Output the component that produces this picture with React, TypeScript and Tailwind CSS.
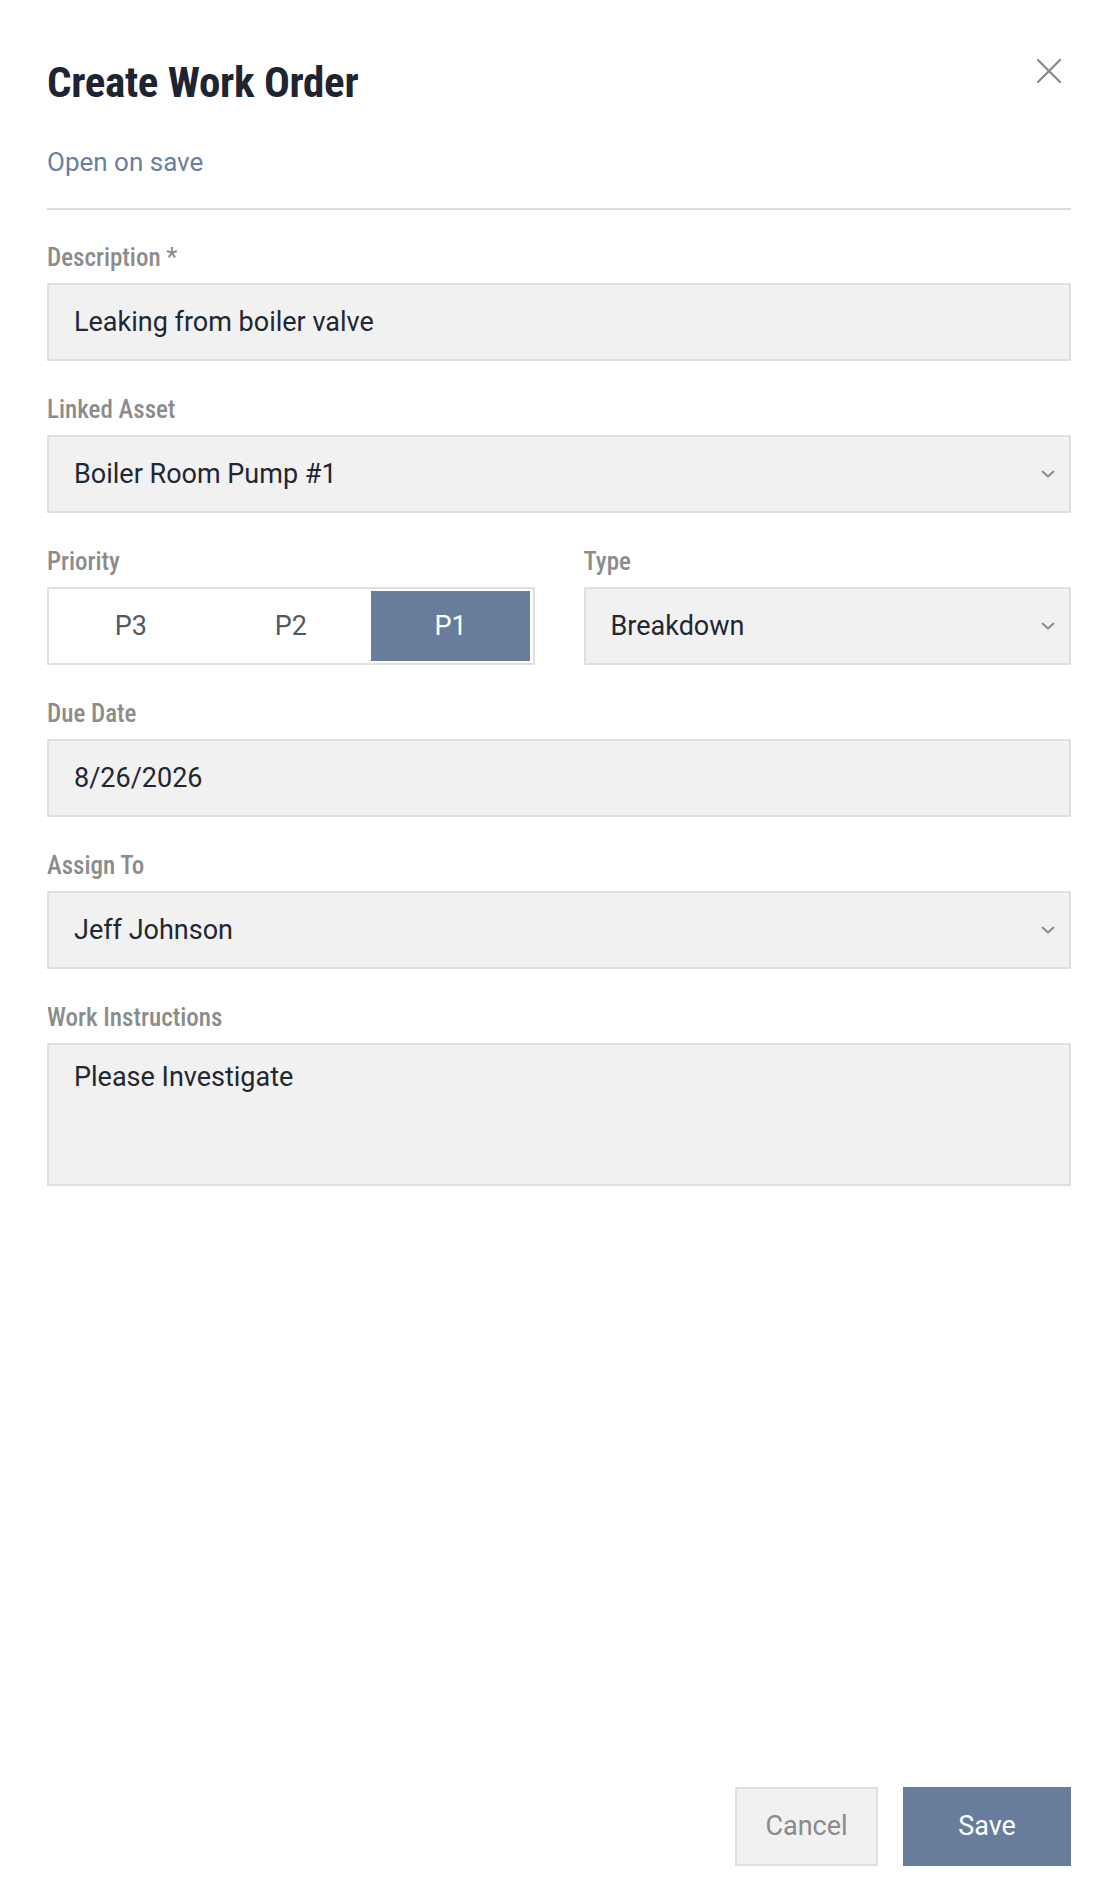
import { ReactNode } from 'react'

const Chevron = () => (
  <svg width="14" height="8" viewBox="0 0 14 8" fill="none" className="shrink-0">
    <path d="M1.5 1.5 L7 6.5 L12.5 1.5" stroke="#8a8a8a" strokeWidth="1.8" strokeLinecap="round" strokeLinejoin="round" />
  </svg>
)

const Field = ({ label, children }: { label: string; children: ReactNode }) => (
  <div className="flex flex-col">
    <div className="h-[26px] text-[25px] font-medium leading-none text-[#8c8c8c] font-stretch-[75%]">
      {label}
    </div>
    <div className="mt-[12px]">{children}</div>
  </div>
)

const Box = ({ value, select }: { value: string; select?: boolean }) => (
  <div className="flex h-[78px] items-center justify-between border-2 border-[#dce0e5] bg-[#f1f1f1] pl-[25px] pr-[14px] text-[27px] text-[#222731]">
    <span>{value}</span>
    {select && <Chevron />}
  </div>
)

export default function App() {
  return (
    <div className="flex min-h-[1894px] w-full flex-col bg-white px-[47px] font-['Roboto',sans-serif]">
      <header className="mt-[61px] flex items-start justify-between">
        <h1 className="h-[43px] text-[43px] font-bold leading-none tracking-[-0.3px] text-[#1f2530] font-stretch-[75%]">
          Create Work Order
        </h1>
        <button className="mr-[8px] mt-[-4px] p-[1px]">
          <svg width="26" height="26" viewBox="0 0 26 26" fill="none">
            <path d="M2 2 L24 24 M24 2 L2 24" stroke="#888888" strokeWidth="2.2" strokeLinecap="round" />
          </svg>
        </button>
      </header>

      <a className="mt-[45px] h-[26px] text-[26px] leading-none text-[#6a7fa0]">Open on save</a>

      <div className="mt-[33px] h-[2px] bg-[#dcdcdc]" />

      <div className="mt-[35px] flex flex-col gap-[36px]">
        <Field label="Description *">
          <Box value="Leaking from boiler valve" />
        </Field>

        <Field label="Linked Asset">
          <Box value="Boiler Room Pump #1" select />
        </Field>

        <div className="grid grid-cols-2 gap-[49px]">
          <Field label="Priority">
            <div className="grid h-[78px] grid-cols-3 border-2 border-[#e0e0e0] bg-white p-[2px] text-[27px]">
              <div className="flex items-center justify-center text-[#555a60]">P3</div>
              <div className="flex items-center justify-center text-[#555a60]">P2</div>
              <div className="flex items-center justify-center bg-[#687d9c] text-white">P1</div>
            </div>
          </Field>
          <Field label="Type">
            <Box value="Breakdown" select />
          </Field>
        </div>

        <Field label="Due Date">
          <Box value="8/26/2026" />
        </Field>

        <Field label="Assign To">
          <Box value="Jeff Johnson" select />
        </Field>

        <Field label="Work Instructions">
          <div className="h-[143px] border-2 border-[#dce0e5] bg-[#f1f1f1] pl-[25px] pt-[12px] text-[27px] text-[#222731]">
            Please Investigate
          </div>
        </Field>
      </div>

      <footer className="mt-auto flex justify-end gap-[25px] pb-[28px]">
        <button className="h-[79px] w-[143px] border-2 border-[#dce0e5] bg-[#f1f1f1] text-[27px] text-[#8a8a8a]">
          Cancel
        </button>
        <button className="h-[79px] w-[168px] bg-[#687d9c] text-[27px] text-white">Save</button>
      </footer>
    </div>
  )
}
